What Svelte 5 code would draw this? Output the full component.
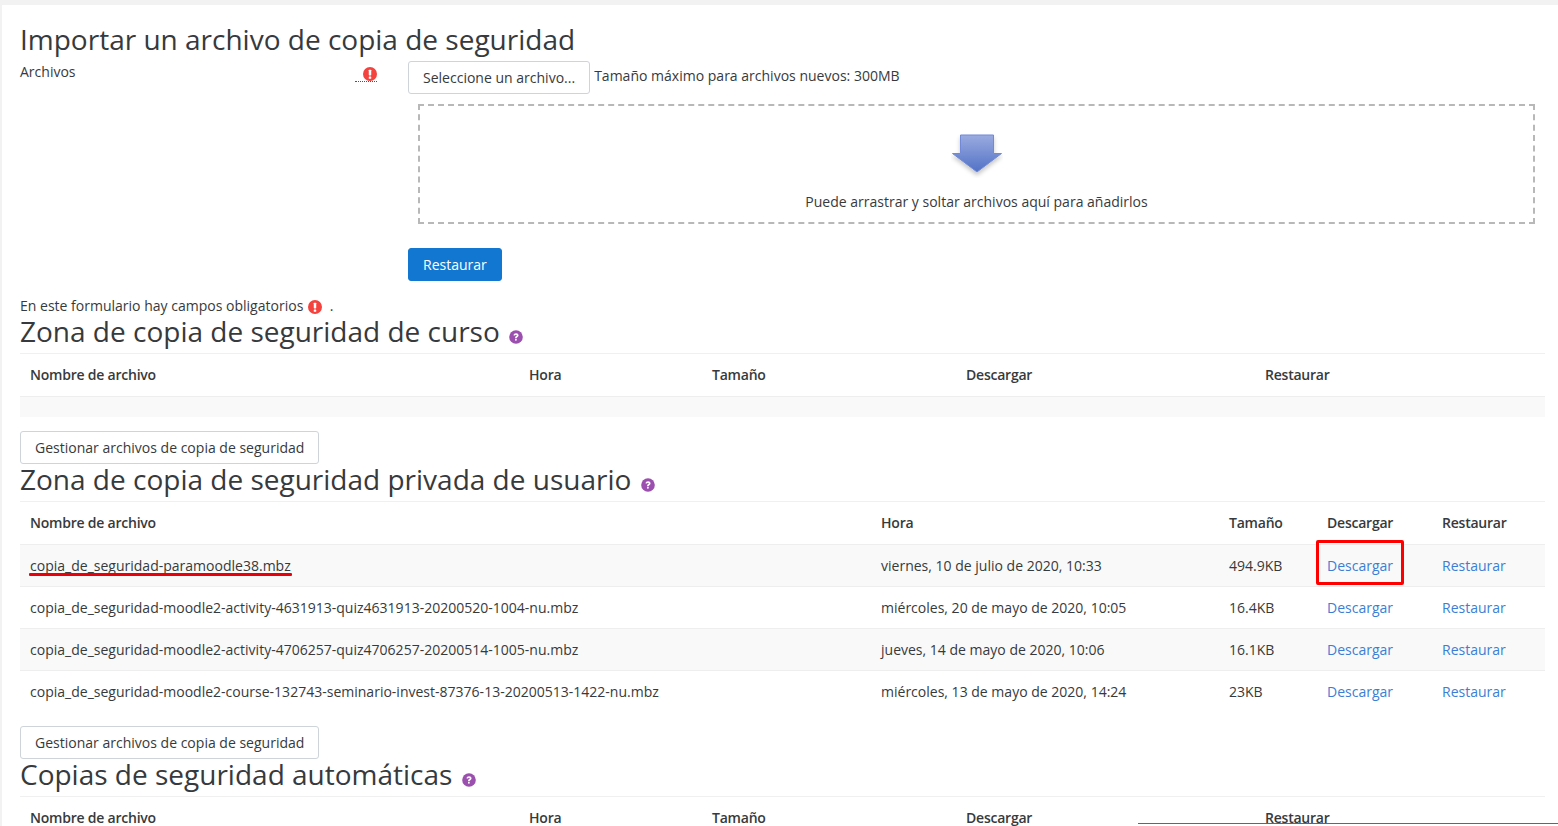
<script>
  const headings = ['Nombre de archivo', 'Hora', 'Tamaño', 'Descargar', 'Restaurar']
  const wideCols = [499, 183, 254, 299, 290]
  const userCols = [851, 348, 98, 115, 113]
  const userFiles = [
    { name: 'copia_de_seguridad-paramoodle38.mbz', time: 'viernes, 10 de julio de 2020, 10:33', size: '494.9KB', marked: true },
    { name: 'copia_de_seguridad-moodle2-activity-4631913-quiz4631913-20200520-1004-nu.mbz', time: 'miércoles, 20 de mayo de 2020, 10:05', size: '16.4KB' },
    { name: 'copia_de_seguridad-moodle2-activity-4706257-quiz4706257-20200514-1005-nu.mbz', time: 'jueves, 14 de mayo de 2020, 10:06', size: '16.1KB' },
    { name: 'copia_de_seguridad-moodle2-course-132743-seminario-invest-87376-13-20200513-1422-nu.mbz', time: 'miércoles, 13 de mayo de 2020, 14:24', size: '23KB' }
  ]
</script>

{#snippet required(extra)}
  <svg class="req {extra}" viewBox="0 0 16 16" width="14" height="14" aria-hidden="true">
    <circle cx="8" cy="8" r="8" fill="#f4433f" />
    <rect x="6.6" y="3" width="2.8" height="6.6" rx="0.8" fill="#fff" />
    <rect x="6.6" y="10.8" width="2.8" height="2.6" rx="0.6" fill="#fff" />
  </svg>
{/snippet}

{#snippet help()}
  <svg class="help" viewBox="0 0 16 16" width="14" height="14" aria-hidden="true">
    <circle cx="8" cy="8" r="7.8" fill="#9b4fae" />
    <path d="M5.2 6.3c0-1.7 1.3-2.7 2.9-2.7 1.6 0 2.8 1 2.8 2.4 0 1.2-.8 1.8-1.4 2.2-.5.3-.7.5-.7 1.1H6.9c0-1.2.4-1.7 1.1-2.1.5-.3.9-.6.9-1.1 0-.5-.4-.8-.9-.8-.6 0-1 .4-1 1z" fill="#fff" />
    <rect x="6.9" y="10.2" width="1.9" height="1.9" fill="#fff" />
  </svg>
{/snippet}

{#snippet head(cols)}
  <colgroup>
    {#each cols as w}
      <col style="width: {w}px" />
    {/each}
  </colgroup>
  <thead>
    <tr>
      {#each headings as h}
        <th>{h}</th>
      {/each}
    </tr>
  </thead>
{/snippet}

<div class="page">
  <main class="card">
    <h2 class="first">Importar un archivo de copia de seguridad</h2>

    <form class="form-row">
      <div class="label-col">
        <span>Archivos</span>
        <span class="req-mark">{@render required('')}</span>
      </div>
      <div class="field-col">
        <div class="picker">
          <button type="button" class="btn">Seleccione un archivo...</button>
          <span>Tamaño máximo para archivos nuevos: 300MB</span>
        </div>
        <div class="dropzone">
          <svg class="arrow" viewBox="0 0 52 44" width="52" height="44" aria-hidden="true">
            <defs>
              <linearGradient id="arrowfill" x1="0" y1="0" x2="0" y2="1">
                <stop offset="0" stop-color="#9aabdf" />
                <stop offset="1" stop-color="#5272c6" />
              </linearGradient>
              <filter id="arrowshadow" x="-20%" y="-20%" width="140%" height="150%">
                <feDropShadow dx="0" dy="3" stdDeviation="2" flood-color="#000" flood-opacity="0.22" />
              </filter>
            </defs>
            <path d="M9.5 1h33v18.5H50.500L26 38 1.500 19.500h8z" fill="url(#arrowfill)" stroke="#7189d6" stroke-width="1" filter="url(#arrowshadow)" />
          </svg>
          <p>Puede arrastrar y soltar archivos aquí para añadirlos</p>
        </div>
        <button type="button" class="btn primary">Restaurar</button>
      </div>
    </form>

    <p class="required-note">En este formulario hay campos obligatorios {@render required('inline')} <span class="dot">.</span></p>

    <h2>Zona de copia de seguridad de curso {@render help()}</h2>
    <table>
      {@render head(wideCols)}
      <tbody>
        <tr class="empty"><td colspan="5"></td></tr>
      </tbody>
    </table>
    <button type="button" class="btn manage">Gestionar archivos de copia de seguridad</button>

    <h2>Zona de copia de seguridad privada de usuario {@render help()}</h2>
    <table>
      {@render head(userCols)}
      <tbody>
        {#each userFiles as f}
          <tr>
            <td><span class:marked={f.marked}>{f.name}</span></td>
            <td>{f.time}</td>
            <td>{f.size}</td>
            <td class:boxed={f.marked}><a href="#top">Descargar</a></td>
            <td><a href="#top">Restaurar</a></td>
          </tr>
        {/each}
      </tbody>
    </table>
    <button type="button" class="btn manage">Gestionar archivos de copia de seguridad</button>

    <h2>Copias de seguridad automáticas {@render help()}</h2>
    <table>
      {@render head(wideCols)}
    </table>
  </main>
  <div class="overlay"></div>
</div>

<style>
  :global(body) {
    margin: 0;
    background: #fff;
    overflow: hidden;
  }

  .page {
    height: 826px;
    overflow: hidden;
    position: relative;
    box-sizing: border-box;
    background: #f2f2f2;
    padding: 5px 0 0 2px;
    font-family: "Open Sans", sans-serif;
    font-size: 14.02px;
    line-height: 21px;
    color: #373a3c;
  }

  .card {
    background: #fff;
    min-height: 100%;
    padding: 0 13px 0 18px;
  }

  h2 {
    margin: 0;
    font-size: 28px;
    font-weight: 400;
    line-height: 31.6px;
    color: #373a3c;
    height: 37px;
  }

  h2.first {
    padding-top: 18px;
    height: 39px;
    line-height: 33.6px;
  }

  .help {
    vertical-align: -2px;
    margin-left: 2px;
  }

  .form-row {
    display: flex;
    margin-top: -1px;
  }

  .label-col {
    width: 388px;
    flex: none;
    display: flex;
    justify-content: space-between;
    align-items: flex-start;
    padding-right: 30px;
    box-sizing: border-box;
  }

  .req-mark {
    display: flex;
    width: 22px;
    height: 20px;
    justify-content: flex-end;
    align-items: flex-end;
    box-sizing: border-box;
    border-bottom: 1px dotted #555;
    margin-right: 1px;
    margin-top: 1px;
  }

  .req {
    flex: none;
  }

  .req-mark .req {
    margin-bottom: -1px;
    position: relative;
    top: -1px;
  }

  .req.inline {
    vertical-align: -3px;
    margin-left: 1px;
  }

  .field-col {
    flex: 1;
    min-width: 0;
  }

  .picker {
    display: flex;
    align-items: flex-start;
    gap: 4px;
  }

  .picker span {
    padding-top: 4px;
  }

  .btn {
    font: inherit;
    color: #373a3c;
    background: #fff;
    border: 1px solid #ced4da;
    border-radius: 3px;
    padding: 5px 14px 5px 14px;
    height: 33px;
    box-sizing: border-box;
    line-height: 21px;
    white-space: nowrap;
  }

  .btn.primary {
    display: block;
    background: #1177d1;
    border-color: #1177d1;
    color: #fff;
    padding: 5px 14px;
    margin-top: 24px;
  }

  .btn.manage {
    display: block;
  }

  .dropzone {
    margin: 10px 10px 0 10px;
    height: 120px;
    box-sizing: border-box;
    border: 2px dashed #b8b8b8;
    text-align: center;
    padding-top: 28px;
  }

  .arrow {
    display: block;
    margin: 0 auto;
  }

  .dropzone p {
    margin: 13px 0 0;
    line-height: 21px;
  }

  .required-note {
    margin: 14px 0 0;
    height: 21px;
  }

  .dot {
    margin-left: 4px;
  }

  table {
    width: 1525px;
    table-layout: fixed;
    border-collapse: collapse;
    margin-bottom: 14px;
  }

  th {
    text-align: left;
    font-weight: 600;
    letter-spacing: -0.23px;
    padding: 10px 10px 11px;
    vertical-align: top;
    border-top: 1px solid #f0f0f0;
    height: 42px;
    box-sizing: border-box;
  }

  td {
    padding: 10px;
    height: 42px;
    box-sizing: border-box;
    border-top: 1px solid #eee;
    white-space: nowrap;
  }

  tbody tr:nth-child(odd) {
    background: #f9f9f9;
  }

  tr.empty td {
    height: 20px;
    padding: 0;
  }

  a {
    color: #3a7fd5;
    text-decoration: none;
  }

  .marked {
    position: relative;
    display: inline-block;
  }

  .marked::after {
    content: "";
    position: absolute;
    left: -1px;
    right: -1px;
    bottom: 0;
    height: 3px;
    background: #e8000b;
    border-radius: 1px;
  }

  .boxed {
    position: relative;
  }

  .boxed::after {
    content: "";
    position: absolute;
    left: -1px;
    top: -5px;
    width: 88px;
    height: 45px;
    box-sizing: border-box;
    border: 3px solid #f00;
    border-radius: 2px;
  }

  .overlay {
    position: absolute;
    left: 1138px;
    top: 823px;
    width: 420px;
    height: 3px;
    background: #fff;
    border-top: 1px solid #666;
  }
</style>
